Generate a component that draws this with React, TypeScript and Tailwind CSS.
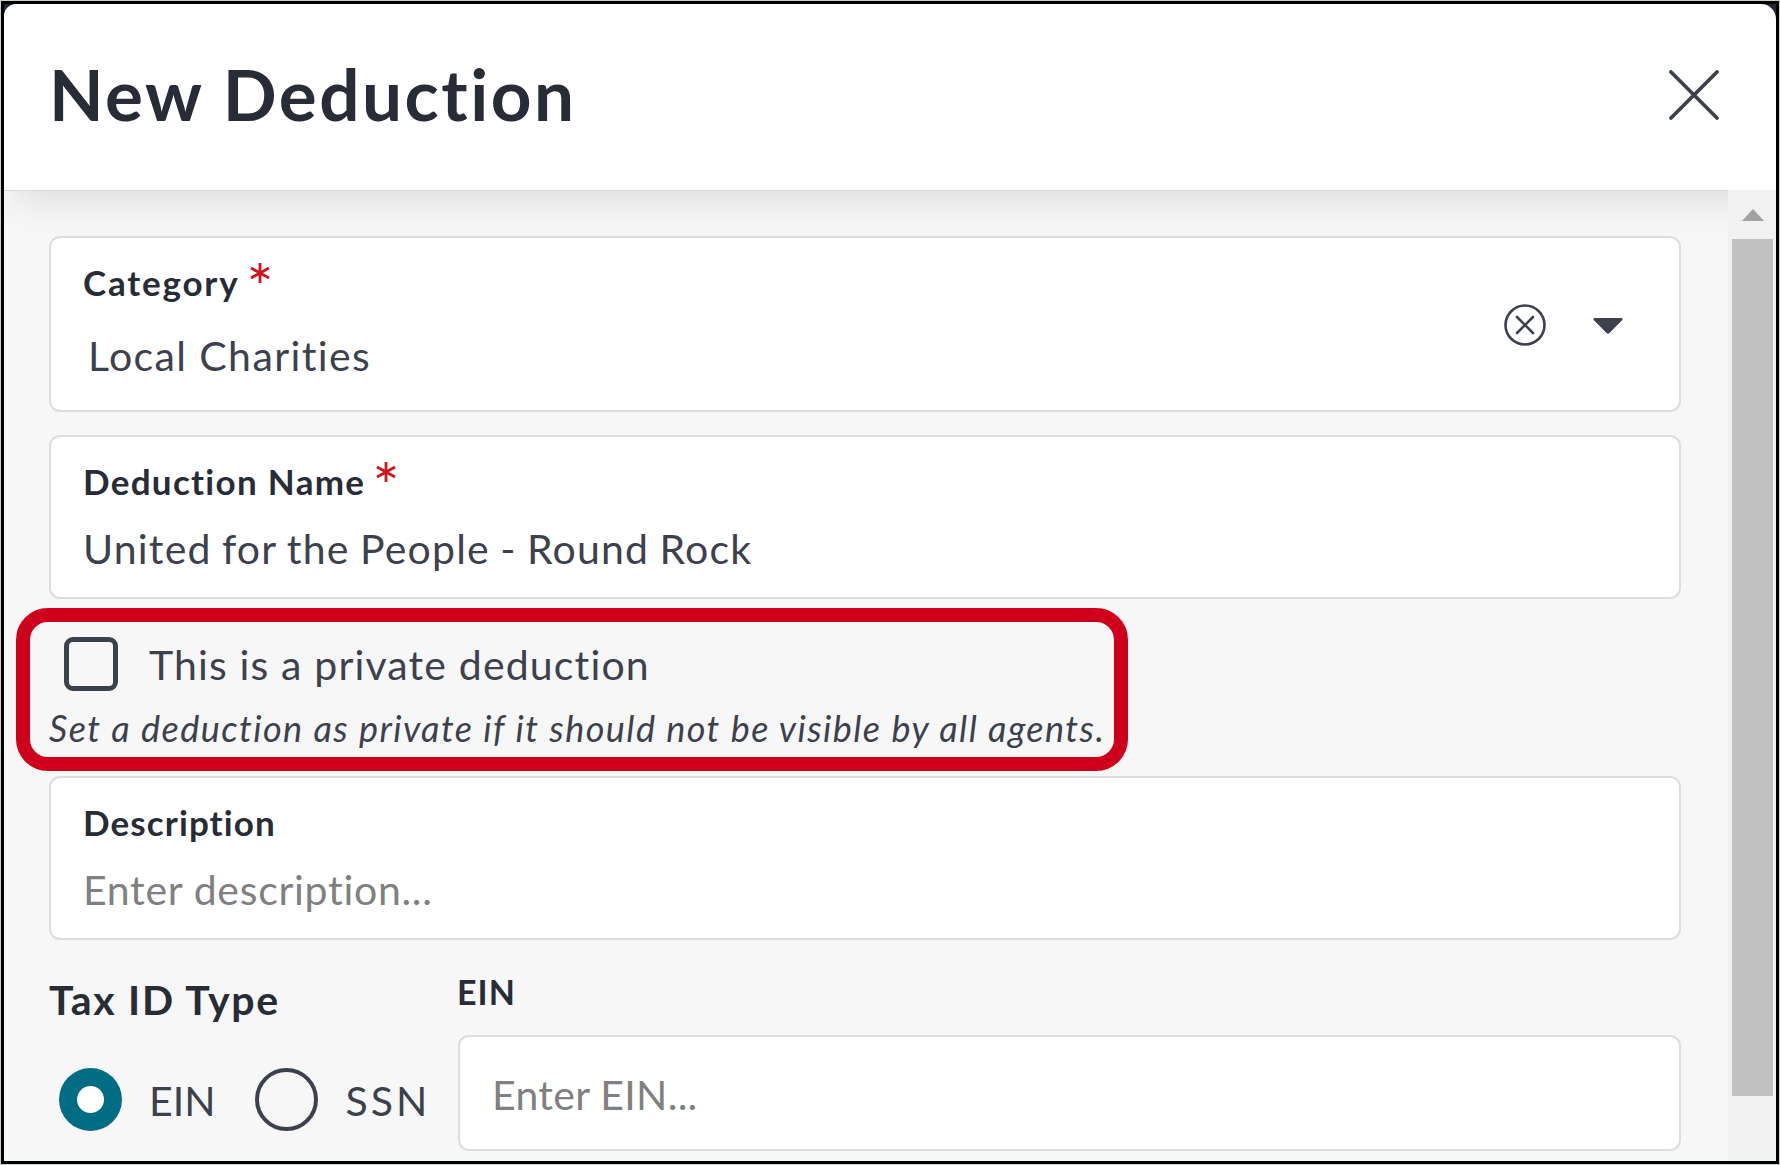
import { useState } from 'react';
import type { ReactNode } from 'react';
import clsx from 'clsx';

function RequiredMark() {
  return (
    <svg className="mt-px ml-[11px] size-[20px] shrink-0" viewBox="0 0 20 20" fill="none" stroke="#d0141c" strokeWidth="2.8">
      <path d="M10 0V20M1 5L19 15M19 5L1 15" />
    </svg>
  );
}

function Field({ label, labelClass, required, className, children }: {
  label: string;
  labelClass?: string;
  required?: boolean;
  className?: string;
  children: ReactNode;
}) {
  return (
    <div className={clsx('flex shrink-0 flex-col rounded-[11px] border-2 border-[#dcddde] bg-white pl-[32px] pt-[24px]', className)}>
      <div className="flex h-10 items-start">
        <span className={clsx('text-[35px] leading-[41px] font-bold text-[#282c37]', labelClass)}>{label}</span>
        {required && <RequiredMark />}
      </div>
      {children}
    </div>
  );
}

function Radio({ checked, label, labelClass, onSelect }: {
  checked: boolean;
  label: string;
  labelClass: string;
  onSelect: () => void;
}) {
  return (
    <button type="button" role="radio" aria-checked={checked} onClick={onSelect} className="flex items-center">
      <span className={clsx('flex size-[63px] items-center justify-center rounded-full', checked ? 'bg-[#006d84]' : 'border-4 border-[#3c414d]')}>
        {checked && <span className="size-[27px] rounded-full bg-white" />}
      </span>
      <span className={clsx('mt-[2px] ml-[27px] text-[41px] leading-[50px] whitespace-nowrap', labelClass)}>{label}</span>
    </button>
  );
}

function Scrollbar() {
  return (
    <div className="flex w-[48px] shrink-0 flex-col items-center bg-[#f1f1f1] pl-px">
      <svg className="mt-[19px] h-[12px] w-[22px]" viewBox="0 0 22 12">
        <path d="M11 0L22 12H0Z" fill="#a1a1a1" />
      </svg>
      <div className="mt-[18px] h-[857px] w-[41px] bg-[#c1c1c1]" />
    </div>
  );
}

export default function App() {
  const [isPrivate, setIsPrivate] = useState(false);
  const [taxType, setTaxType] = useState('EIN');

  return (
    <div className="h-[1165px] w-[1780px] bg-[#c9d1cc] p-px font-['Lato',sans-serif] text-[#3c414d]">
      <div className="flex h-full w-full flex-col overflow-hidden border-[3px] border-black bg-[#242833]">
        <header className="flex h-[186px] shrink-0 items-center justify-between rounded-tl-[12px] rounded-tr-[15px] bg-white pr-[57px] pl-[45px]">
          <h1 className="-mt-[6px] text-[71px] leading-[80px] font-bold tracking-[2.5px] text-[#282c37]">New Deduction</h1>
          <button type="button" aria-label="Close" className="-mt-[4px]">
            <svg className="size-[50px]" viewBox="0 0 50 50" fill="none" stroke="#3c414d" strokeWidth="3.8" strokeLinecap="round">
              <path d="M2 2L48 48M48 2L2 48" />
            </svg>
          </button>
        </header>

        <div className="flex min-h-0 flex-1 bg-[#f7f7f7]">
          <div className="relative flex min-w-0 flex-1 flex-col overflow-hidden pt-[46px] pr-[47px] pl-[45px]">
            <div className="absolute -top-10 -right-8 left-3 h-10 shadow-[0_8px_40px_0_rgba(0,0,0,0.13)]" />
            <div className="absolute inset-x-0 top-0 h-px bg-[#dadada]" />

            <Field label="Category" labelClass="tracking-[1.8px]" required className="relative h-[176px]">
              <span className="mt-[29px] ml-[5px] text-[41px] leading-[50px] tracking-[1.4px]">Local Charities</span>
              <div className="absolute top-[66px] right-[56px] flex items-center gap-[47px]">
                <svg className="size-[42px]" viewBox="0 0 42 42" fill="none" stroke="#3c414d" strokeWidth="2.6" strokeLinecap="round">
                  <circle cx="21" cy="21" r="19.5" />
                  <path d="M13 13L29 29M29 13L13 29" />
                </svg>
                <svg className="mt-px h-[16px] w-[30px]" viewBox="0 0 30 16" fill="#3c414d">
                  <path d="M1.5 0H28.5Q30.5 0.5 29 2.2L16.5 15Q15 16.5 13.5 15L1 2.2Q-.5 .5 1.5 0Z" />
                </svg>
              </div>
            </Field>

            <Field label="Deduction Name" labelClass="tracking-[1.3px]" required className="mt-[23px] h-[164px]">
              <span className="mt-[23px] text-[41px] leading-[50px] tracking-[1.2px] [word-spacing:-1.4px]">United for the People - Round Rock</span>
            </Field>

            <div className="mt-[9px] -ml-[33px] flex h-[163px] w-[1112px] shrink-0 flex-col rounded-[32px] border-[14px] border-[#ce001b] pt-[14px] pl-[19px]">
              <label className="ml-[15px] flex h-[56px] items-center">
                <input type="checkbox" checked={isPrivate} onChange={e => setIsPrivate(e.target.checked)}
                  className="size-[54px] appearance-none rounded-[9px] border-[5px] border-[#3c414d] bg-[#f7f7f7] checked:bg-[#006d84]" />
                <span className="mt-[2px] ml-[31px] text-[41px] leading-[50px] tracking-[1.15px]">This is a private deduction</span>
              </label>
              <p className="mt-[16px] text-[36px] leading-10 tracking-[1.45px] whitespace-nowrap italic">
                Set a deduction as private if it should not be visible by all agents.
              </p>
            </div>

            <Field label="Description" labelClass="tracking-[1.1px]" className="mt-[5px] h-[164px]">
              <input placeholder="Enter description..."
                className="mt-[23px] h-[50px] w-full text-[41px] leading-[50px] tracking-[0.7px] outline-none placeholder:text-[#808080]" />
            </Field>

            <div className="mt-[31px] flex shrink-0">
              <div className="w-[409px] shrink-0">
                <h2 className="mt-[4px] text-[41px] leading-[50px] font-bold tracking-[1.7px] text-[#282c37]">Tax ID Type</h2>
                <div role="radiogroup" className="mt-[43px] ml-[10px] flex gap-[40px]">
                  <Radio label="EIN" labelClass="tracking-[0px]" checked={taxType === 'EIN'} onSelect={() => setTaxType('EIN')} />
                  <Radio label="SSN" labelClass="tracking-[3px]" checked={taxType === 'SSN'} onSelect={() => setTaxType('SSN')} />
                </div>
              </div>
              <div className="flex flex-1 flex-col">
                <span className="-ml-px text-[34px] leading-[41px] font-bold tracking-[1px] text-[#282c37]">EIN</span>
                <input placeholder="Enter EIN..."
                  className="mt-[23px] h-[116px] w-full rounded-[11px] border-2 border-[#dcddde] bg-white px-[32px] pt-[2px] text-[41px] leading-[50px] tracking-[0.3px] outline-none placeholder:text-[#808080]" />
              </div>
            </div>
          </div>
          <Scrollbar />
        </div>
      </div>
    </div>
  );
}
